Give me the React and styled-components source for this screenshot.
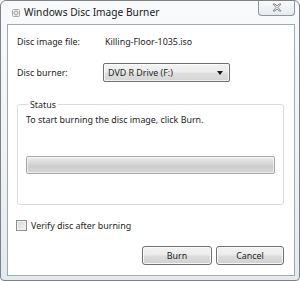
import React from "react";
import styled, { createGlobalStyle } from "styled-components";

const Global = createGlobalStyle`
  html, body { margin: 0; padding: 0; background: #ffffff; }
  body { font-family: "Segoe UI", "Noto Sans", sans-serif; }
  * { box-sizing: border-box; }
`;

const Window = styled.div`
  width: 300px;
  height: 281px;
  border: 1px solid #7c8287;
  border-radius: 6px 6px 4px 4px;
  background: linear-gradient(#f8fafc 0%, #eef2f6 60%, #e2e9f0 100%);
  display: flex;
  flex-direction: column;
  overflow: hidden;
`;

const TitleBar = styled.div`
  height: 23px;
  display: flex;
  align-items: flex-start;
  position: relative;
`;

const TitleIcon = styled.svg`
  margin: 8px 0 0 11px;
  width: 8px;
  height: 8px;
  flex: none;
`;

const TitleText = styled.div`
  margin: 4px 0 0 4px;
  font-size: 10.2px;
  line-height: 14px;
  color: #1b1b1b;
`;

const CloseButton = styled.div`
  position: absolute;
  right: 4px;
  top: -1px;
  width: 37px;
  height: 16px;
  border: 1px solid #8d969e;
  border-top: none;
  border-radius: 0 0 4px 4px;
  background: linear-gradient(#fbfcfd, #e6ebf0);
  display: flex;
  align-items: center;
  justify-content: center;
`;

const Client = styled.div`
  flex: 1;
  margin: 0 4px 4px 6px;
  border: 1px solid #a0a9b2;
  background: #ffffff;
  display: flex;
  flex-direction: column;
  padding: 7px 10px 0 9px;
  font-size: 8.9px;
  color: #1e1e1e;
`;

const FieldRow = styled.div`
  display: grid;
  grid-template-columns: 86px 1fr;
  align-items: center;
  height: ${(p) => p.$h}px;
  margin-top: ${(p) => p.$mt || 0}px;
`;

const Label = styled.span`
  white-space: nowrap;
`;

const Value = styled.span`
  padding-left: 2px;
  white-space: nowrap;
`;

const Combo = styled.div`
  width: 127px;
  height: 19px;
  border: 1px solid #707070;
  border-radius: 2px;
  background: linear-gradient(#f3f3f3 0%, #ececec 48%, #dfdfdf 52%, #d5d5d5 100%);
  display: flex;
  align-items: center;
  justify-content: space-between;
  padding: 0 6px 0 4px;
  box-shadow: inset 0 0 0 1px rgba(255,255,255,0.7);
`;

const Arrow = styled.span`
  width: 0;
  height: 0;
  border-left: 3.5px solid transparent;
  border-right: 3.5px solid transparent;
  border-top: 4px solid #1a1a1a;
`;

const Group = styled.fieldset`
  margin: 16px 0 0 0;
  padding: 2px 8px 30px 8px;
  border: 1px solid #d8dde2;
  border-radius: 3px;
  display: flex;
  flex-direction: column;
`;

const Legend = styled.legend`
  padding: 0 2px;
  margin-left: 2px;
  line-height: 13px;
`;

const StatusText = styled.div`
  line-height: 13px;
  white-space: nowrap;
`;

const Progress = styled.div`
  margin-top: 30px;
  height: 18px;
  border: 1px solid #a9a9a9;
  border-radius: 2px;
  background: linear-gradient(#eeeeee 0%, #dadada 35%, #cdcdcd 60%, #d8d8d8 100%);
  box-shadow: inset 0 0 0 1px rgba(255,255,255,0.5);
`;

const CheckRow = styled.label`
  display: flex;
  align-items: center;
  gap: 4px;
  margin-top: 14px;
  height: 13px;
`;

const CheckBox = styled.span`
  width: 11px;
  height: 11px;
  border: 1px solid #8e8f8f;
  background: linear-gradient(135deg, #d6d6d6, #f4f4f4);
  box-shadow: inset 0 0 0 1px #f1f1f1;
  margin-left: -1px;
`;

const Buttons = styled.div`
  display: flex;
  justify-content: flex-end;
  gap: 4px;
  margin-top: 14px;
`;

const Button = styled.div`
  width: ${(p) => p.$w}px;
  height: 19px;
  border: 1px solid #707070;
  border-radius: 3px;
  background: linear-gradient(#f2f2f2 0%, #ebebeb 48%, #dddddd 52%, #cfcfcf 100%);
  box-shadow: inset 0 0 0 1px rgba(255,255,255,0.8);
  display: flex;
  align-items: center;
  justify-content: center;
`;

export default function App() {
  return (
    <>
      <Global />
      <Window>
        <TitleBar>
          <TitleIcon viewBox="0 0 8 8">
            <rect x="0.5" y="0.5" width="7" height="7" rx="1" fill="#f2f2f2" stroke="#a8a8a8" />
            <circle cx="4" cy="4" r="2.1" fill="#dcdcdc" stroke="#9a9a9a" strokeWidth="0.8" />
            <circle cx="4" cy="4" r="0.6" fill="#ffffff" />
          </TitleIcon>
          <TitleText>Windows Disc Image Burner</TitleText>
          <CloseButton>
            <svg width="10" height="9" viewBox="0 0 10 9">
              <path
                d="M1 1 L3 1 L5 3 L7 1 L9 1 L6 4.5 L9 8 L7 8 L5 6 L3 8 L1 8 L4 4.5 Z"
                fill="#e8e8e8"
                stroke="#6f7478"
                strokeWidth="0.8"
                strokeLinejoin="round"
              />
            </svg>
          </CloseButton>
        </TitleBar>
        <Client>
          <FieldRow $h={18}>
            <Label>Disc image file:</Label>
            <Value>Killing-Floor-1035.iso</Value>
          </FieldRow>
          <FieldRow $h={19} $mt={13}>
            <Label>Disc burner:</Label>
            <Combo>
              <span>DVD R Drive (F:)</span>
              <Arrow />
            </Combo>
          </FieldRow>
          <Group>
            <Legend>Status</Legend>
            <StatusText>To start burning the disc image, click Burn.</StatusText>
            <Progress />
          </Group>
          <CheckRow>
            <CheckBox />
            <span>Verify disc after burning</span>
          </CheckRow>
          <Buttons>
            <Button $w={70}>Burn</Button>
            <Button $w={68}>Cancel</Button>
          </Buttons>
        </Client>
      </Window>
    </>
  );
}
